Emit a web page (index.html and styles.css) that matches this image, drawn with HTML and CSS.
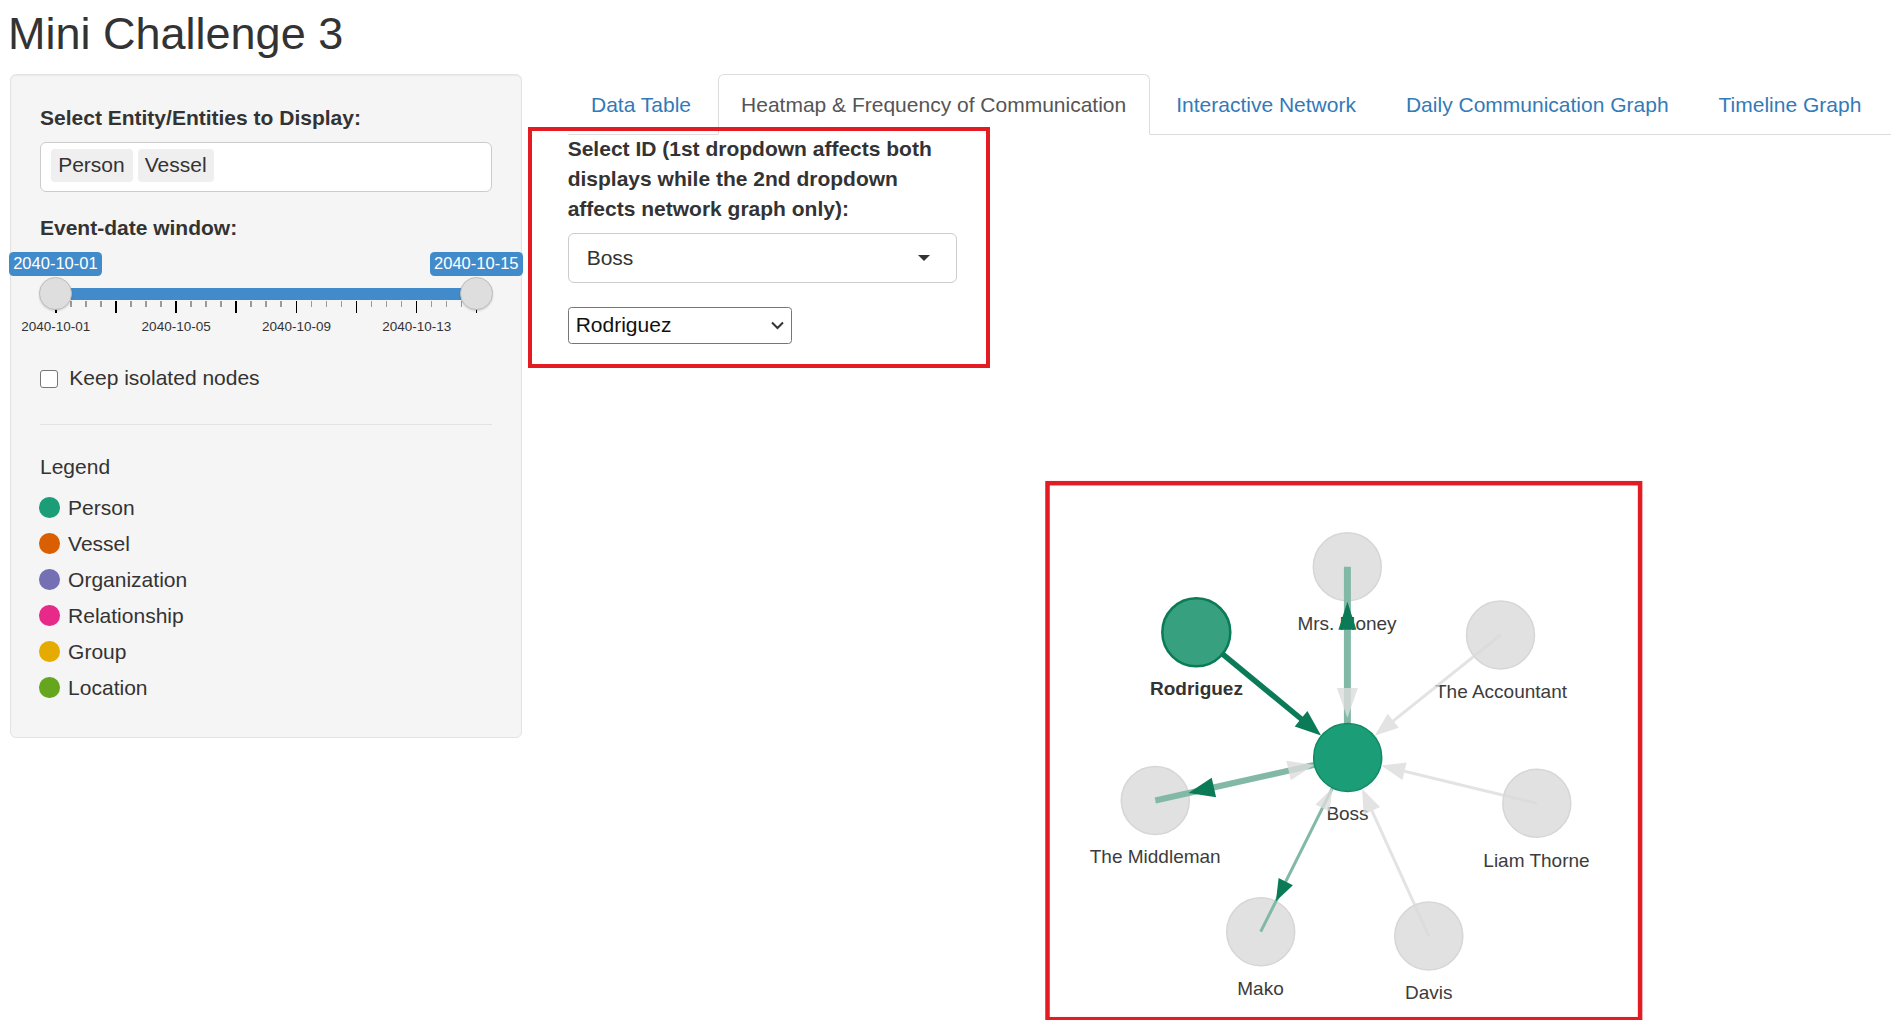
FILE: index.html
```html
<!DOCTYPE html>
<html lang="en">
<head>
<meta charset="utf-8">
<title>Mini Challenge 3</title>
<link rel="stylesheet" href="styles.css">
</head>
<body>
<h2 class="title">Mini Challenge 3</h2>
<div class="layout">
  <aside class="sidebar">
    <div class="form-group entity-group">
      <label class="control-label">Select Entity/Entities to Display:</label>
      <div class="multi-input"><span class="chip">Person</span><span class="chip">Vessel</span></div>
    </div>
    <div class="form-group slider-group">
      <label class="control-label">Event-date window:</label>
      <div class="slider-vals"><span class="val">2040-10-01</span><span class="val">2040-10-15</span></div>
      <div class="track">
        <div class="bar"></div>
        <span class="handle handle-from"></span>
        <span class="handle handle-to"></span>
      </div>
      <div class="ticks">
        <i class="big"></i><i></i><i></i><i></i><i class="big"></i><i></i><i></i><i></i><i class="big"></i><i></i><i></i><i></i><i class="big"></i><i></i><i></i><i></i><i class="big"></i><i></i><i></i><i></i><i class="big"></i><i></i><i></i><i></i><i class="big"></i><i></i><i></i><i></i><i class="big"></i>
      </div>
      <div class="grid-labels"><span>2040-10-01</span><span>2040-10-05</span><span>2040-10-09</span><span>2040-10-13</span></div>
    </div>
    <label class="checkbox"><span class="box"></span><span>Keep isolated nodes</span></label>
    <hr class="divider">
    <div class="legend-title">Legend</div>
    <ul class="legend">
      <li><span class="dot person"></span>Person</li>
      <li><span class="dot vessel"></span>Vessel</li>
      <li><span class="dot org"></span>Organization</li>
      <li><span class="dot rel"></span>Relationship</li>
      <li><span class="dot group"></span>Group</li>
      <li><span class="dot loc"></span>Location</li>
    </ul>
  </aside>
  <main class="main">
    <ul class="tabs">
      <li><a>Data Table</a></li>
      <li class="active"><a>Heatmap &amp; Frequency of Communication</a></li>
      <li><a>Interactive Network</a></li>
      <li><a>Daily Communication Graph</a></li>
      <li><a>Timeline Graph</a></li>
    </ul>
    <div class="annot annot-select"></div>
    <div class="tab-content">
      <div class="select-group">
        <label class="control-label id-label">Select ID (1st dropdown affects both displays while the 2nd dropdown affects network graph only):</label>
        <div class="selectize"><span>Boss</span><span class="caret"></span></div>
        <div class="native-select"><span>Rodriguez</span>
          <svg width="13" height="9" viewBox="0 0 13 9"><path d="M1 1.5 L6.5 7 L12 1.5" fill="none" stroke="#333" stroke-width="2"/></svg>
        </div>
      </div>
      <svg class="network" width="1323" height="640" viewBox="567.5 380 1323 640">
        <!-- faded nodes -->
        <g fill="#e1e1e1" stroke="#d6d6d6" stroke-width="1.5">
          <circle cx="1346.8" cy="566.7" r="34"/>
          <circle cx="1500" cy="635" r="34"/>
          <circle cx="1154.8" cy="800.5" r="34"/>
          <circle cx="1536.3" cy="803.3" r="34"/>
          <circle cx="1260.2" cy="931.7" r="34"/>
          <circle cx="1428.3" cy="936" r="34"/>
        </g>
        <g class="nlabel" font-size="19" text-anchor="middle" fill="#3c3c3c">
          <text x="1346.5" y="630">Mrs. Money</text>
          <text x="1500.5" y="698">The Accountant</text>
          <text x="1347" y="820">Boss</text>
          <text x="1154.7" y="863">The Middleman</text>
          <text x="1536" y="866.5">Liam Thorne</text>
          <text x="1260" y="995">Mako</text>
          <text x="1428.3" y="999">Davis</text>
          <text x="1196" y="695" font-weight="bold" fill="#333">Rodriguez</text>
        </g>
        <!-- grey edges -->
        <g stroke="#d9d9d9" stroke-opacity="0.75" stroke-width="3" fill="none">
          <line x1="1500" y1="635" x2="1392.8" y2="720.8"/>
          <line x1="1536.3" y1="803.3" x2="1404" y2="771.2"/>
          <line x1="1428.3" y1="936" x2="1371.4" y2="810.6"/>
        </g>
        <!-- highlighted edges -->
        <g stroke="#82b8a6" fill="none">
          <line x1="1346.9" y1="566.7" x2="1346.9" y2="726" stroke-width="7"/>
          <line x1="1347.2" y1="757.4" x2="1154.8" y2="800.5" stroke-width="6"/>
          <line x1="1347.2" y1="757.4" x2="1260.2" y2="931.7" stroke-width="3"/>
        </g>
        <line x1="1195.8" y1="632.3" x2="1302" y2="720" stroke="#0b7b57" stroke-width="5.5"/>
        <!-- grey arrowheads -->
        <g fill="#dcdcdc" fill-opacity="0.8">
          <polygon points="1346.9,718 1336.4,688 1357.4,688"/>
          <polygon points="1374.1,735.8 1387.2,713.8 1398.4,727.8"/>
          <polygon points="1313.5,764.9 1290.3,780.3 1285.9,760.8"/>
          <polygon points="1380.7,765.5 1406.1,762.4 1401.9,779.9"/>
          <polygon points="1331.8,788.3 1329.1,811.6 1314.8,804.4"/>
          <polygon points="1361.5,788.8 1379.6,806.9 1363.2,814.4"/>
        </g>
        <!-- green arrowheads -->
        <g fill="#0b7b57">
          <polygon points="1320.6,735.4 1294.2,726.5 1306.9,711.1"/>
          <polygon points="1346.9,601.7 1337.9,629.7 1355.9,629.7"/>
          <polygon points="1188,793.1 1211.2,777.7 1215.6,797.2"/>
          <polygon points="1275.4,901.3 1278.1,878 1292.4,885.2"/>
        </g>
        <!-- highlighted nodes -->
        <circle cx="1195.8" cy="632.3" r="34" fill="#37a17f" stroke="#0b7b57" stroke-width="2.5"/>
        <circle cx="1347.2" cy="757.4" r="34" fill="#1b9e77" stroke="#118a64" stroke-width="1.5"/>
        <!-- annotation -->
        <rect x="1047" y="483.2" width="592.6" height="536" fill="none" stroke="#e31b23" stroke-width="4.5"/>
      </svg>
    </div>
  </main>
</div>
</body>
</html>
```

FILE: styles.css
```css
* { box-sizing: border-box; }

html, body {
  margin: 0;
  padding: 0;
  background: #fff;
  overflow: hidden;
}

body {
  font-family: "Liberation Sans", Arial, Helvetica, sans-serif;
  font-size: 21px;
  line-height: 30px;
  color: #333;
}

.title {
  margin: 0 0 15px 8px;
  padding-top: 9px;
  font-size: 45px;
  line-height: 50px;
  font-weight: normal;
  color: #333;
}

.layout {
  display: flex;
  align-items: flex-start;
  gap: 45.5px;
}

/* ---------- sidebar ---------- */
.sidebar {
  flex: 0 0 512px;
  margin-left: 10px;
  background: #f5f5f5;
  border: 1px solid #e3e3e3;
  border-radius: 6px;
  box-shadow: inset 0 1px 1px rgba(0, 0, 0, 0.05);
  padding: 28px 29px 31.6px;
}

.control-label {
  display: block;
  font-weight: bold;
  margin-bottom: 9px;
}

.entity-group { margin-bottom: 20.7px; }

.multi-input {
  height: 50px;
  background: #fff;
  border: 1px solid #ccc;
  border-radius: 6px;
  padding: 6.3px 10px 0;
  display: flex;
  align-items: flex-start;
  gap: 5px;
}

.chip {
  height: 32.4px;
  line-height: 32.4px;
  padding: 0 7.8px 0 7.2px;
  background: #efefef;
  border-radius: 4px;
  color: #333;
}

/* slider */
.slider-group .control-label { margin-bottom: 0; }

.slider-vals {
  display: flex;
  justify-content: space-between;
  margin: 9.6px -30.7px 0 -31px;
}

.val {
  height: 23.4px;
  line-height: 23.4px;
  padding: 0 4.2px;
  background: #428bca;
  color: #fff;
  font-size: 16.5px;
  border-radius: 4.5px;
}

.track {
  position: relative;
  height: 23.7px;
  margin-top: 1.6px;
  padding-top: 11px;
}

.bar {
  height: 11.7px;
  margin: 0 15.4px 0 15.3px;
  background: #428bca;
}

.handle {
  position: absolute;
  top: 0;
  width: 32.6px;
  height: 32.6px;
  border-radius: 50%;
  background: #dedede;
  border: 1px solid #bdbdbd;
  box-shadow: 0 1px 2px rgba(0, 0, 0, 0.15);
  z-index: 2;
}

.handle-from { left: -1px; }
.handle-to { right: -1px; }

.ticks {
  display: flex;
  justify-content: space-between;
  align-items: flex-start;
  height: 11.7px;
  margin: 0 14.6px 0 15px;
}

.ticks i {
  display: block;
  width: 1.5px;
  height: 5.7px;
  background: #9a9a9a;
}

.ticks i.big {
  height: 11.7px;
  background: #000;
}

.grid-labels {
  display: flex;
  margin: 6.3px 0 0 -44.3px;
  height: 16px;
}

.grid-labels span {
  flex: 0 0 120.3px;
  text-align: center;
  font-size: 13.5px;
  line-height: 16px;
  color: #333;
}

.checkbox {
  display: flex;
  align-items: flex-start;
  gap: 11px;
  margin-top: 27.7px;
  font-weight: normal;
}

.checkbox .box {
  flex: 0 0 18.3px;
  height: 18.3px;
  margin-top: 7.3px;
  background: #fff;
  border: 1.5px solid #767676;
  border-radius: 3px;
}

.divider {
  margin: 31.3px 0 0;
  border: 0;
  border-top: 1px solid #e3e3e3;
}

.legend-title { margin-top: 26.7px; }

.legend {
  list-style: none;
  margin: 8px 0 0;
  padding: 0;
}

.legend li {
  display: flex;
  align-items: center;
  gap: 8.5px;
  height: 36px;
  line-height: 36px;
}

.dot {
  flex: 0 0 20.6px;
  height: 20.6px;
  border-radius: 50%;
  margin-left: -1px;
}

.dot.person { background: #1b9e77; }
.dot.vessel { background: #d95f02; }
.dot.org { background: #7570b3; }
.dot.rel { background: #e7298a; }
.dot.group { background: #e6ab02; }
.dot.loc { background: #66a61e; }

/* ---------- main ---------- */
.main {
  flex: 1;
  position: relative;
}

.tabs {
  display: flex;
  list-style: none;
  margin: 0;
  padding: 0;
  border-bottom: 1px solid #ddd;
}

.tabs li { margin-bottom: -1px; }

.tabs a {
  display: block;
  padding: 14.5px 22.5px;
  line-height: 30px;
  margin-right: 3px;
  border: 1px solid transparent;
  border-radius: 6px 6px 0 0;
  color: #337ab7;
}

.tabs li.active a {
  background: #fff;
  color: #555;
  border-color: #ddd #ddd transparent;
}

.annot {
  position: absolute;
  border: 4.5px solid #e31b23;
  pointer-events: none;
}

.annot-select {
  left: -39.2px;
  top: 52.7px;
  width: 461.7px;
  height: 241.6px;
}

.select-group {
  width: 389px;
  margin-left: 0.2px;
}

.id-label {
  margin-top: -1.3px;
  margin-bottom: 9.6px;
}

.selectize {
  display: flex;
  align-items: center;
  justify-content: space-between;
  height: 50px;
  padding: 0 26px 0 18px;
  background: #fff;
  border: 1px solid #ccc;
  border-radius: 6px;
}

.caret {
  width: 0;
  height: 0;
  border-left: 6.7px solid transparent;
  border-right: 6.7px solid transparent;
  border-top: 6.7px solid #333;
}

.native-select {
  display: flex;
  align-items: center;
  justify-content: space-between;
  width: 224px;
  height: 37.6px;
  margin-top: 23.4px;
  padding: 0 7px 0 7px;
  background: #fff;
  border: 1px solid #767676;
  border-radius: 3.5px;
  color: #111;
}

.network {
  display: block;
  margin-top: 35.7px;
}

.nlabel text {
  font-family: "Liberation Sans", Arial, Helvetica, sans-serif;
}
```
